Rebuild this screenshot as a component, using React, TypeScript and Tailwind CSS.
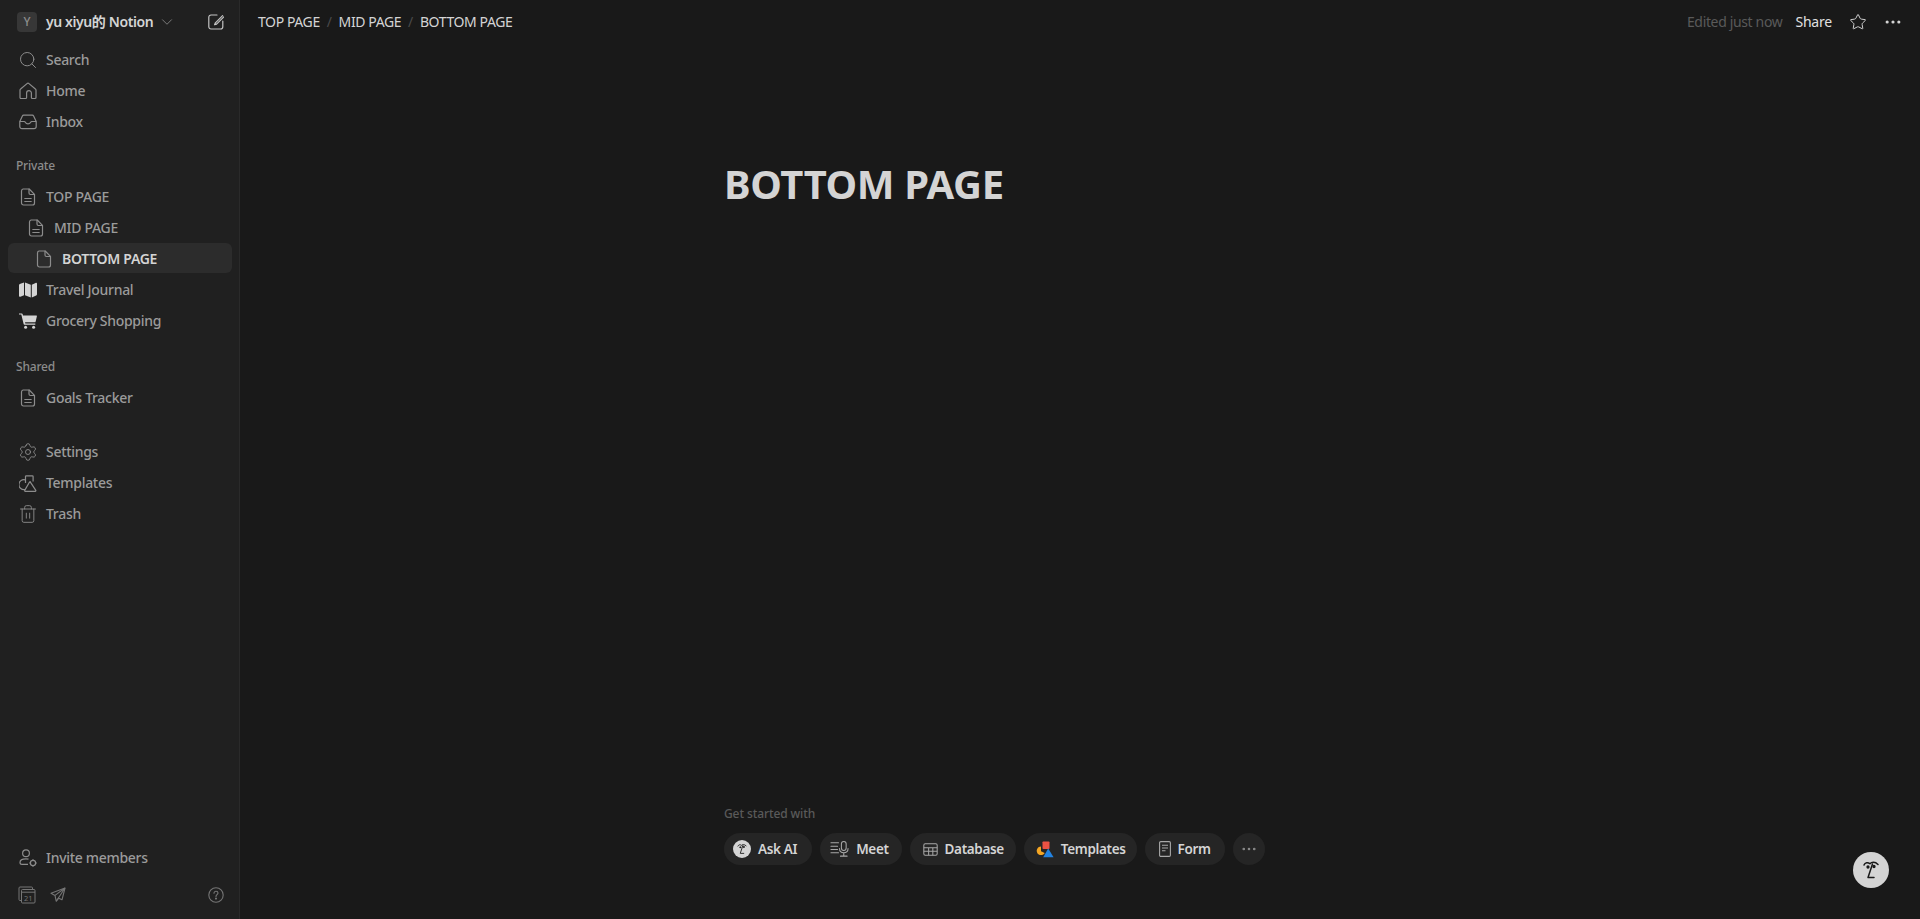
import type { ReactNode } from 'react';
import { ChevronDown, Ellipsis, Search, Settings, Star, Trash2 } from 'lucide-react';

function FileLines({ lines = true }: { lines?: boolean }) {
  return (
    <svg viewBox="0 0 16 18" className="h-[18px] w-4" fill="none" stroke="currentColor" strokeWidth="1.2" strokeLinejoin="round" strokeLinecap="round">
      <path d="M3 1h6.2L14.5 6.4V15a2 2 0 0 1-2 2H3.5a2 2 0 0 1-2-2V3a2 2 0 0 1 1.5-2Z" />
      <path d="M9 1.2V5a1.5 1.5 0 0 0 1.5 1.5h3.8" />
      {lines && <path d="M4.8 10.5h6.4M4.8 13.5h6.4" />}
    </svg>
  );
}

function HomeIcon() {
  return (
    <svg viewBox="0 0 18 18" className="h-[18px] w-[18px]" fill="none" stroke="currentColor" strokeWidth="1.2" strokeLinejoin="round">
      <path d="M1 15.5V8.2a1.6 1.6 0 0 1 .6-1.2L8 1.6a1.6 1.6 0 0 1 2 0l6.4 5.4a1.6 1.6 0 0 1 .6 1.2v7.3a1 1 0 0 1-1 1h-2.6a1 1 0 0 1-1-1V11a2.4 2.4 0 0 0-4.8 0v4.5a1 1 0 0 1-1 1H2a1 1 0 0 1-1-1Z" />
    </svg>
  );
}

function InboxIcon() {
  return (
    <svg viewBox="0 0 18 18" className="h-[18px] w-[18px]" fill="none" stroke="currentColor" strokeWidth="1.2" strokeLinejoin="round">
      <path d="M.8 8.5 3.4 3a1.4 1.4 0 0 1 1.3-.8h8.6a1.4 1.4 0 0 1 1.3.8l2.6 5.5v5a2.2 2.2 0 0 1-2.2 2.2H3a2.2 2.2 0 0 1-2.2-2.2Z" />
      <path d="M.8 8.5h4.4c.8 0 1 .5 1.3 1.1.4.8 1.1 1.3 2.5 1.3s2.1-.5 2.5-1.3c.3-.6.5-1.1 1.3-1.1h4.4" />
    </svg>
  );
}

function MapIcon() {
  return (
    <svg viewBox="0 0 18 16" className="h-4 w-[18px]" fill="currentColor">
      <path d="M0 3.2c0-.5.3-.9.8-1.1L5 .6v12.6l-3.6 1.5c-.7.3-1.4-.2-1.4-.9ZM6 .6l5.8 2.2v12.6L6 13.2ZM12.8 2.8 16.6.9c.7-.3 1.4.2 1.4.9v10.5c0 .5-.3.9-.8 1.1l-4.4 2Z" />
    </svg>
  );
}

function CartIcon() {
  return (
    <svg viewBox="0 0 18 16" className="h-4 w-[18px]" fill="currentColor">
      <path d="M0 .4h2.8c.4 0 .7.2.8.6l.4 1.4h13.2c.5 0 .8.5.7.9l-1.3 5.4c-.1.4-.4.6-.8.6H6l.3 1.3h10v1.2H5.4c-.3 0-.6-.2-.7-.5L2.3 1.6H0Z" />
      <circle cx="6.6" cy="14.2" r="1.5" />
      <circle cx="14.6" cy="14.2" r="1.5" />
    </svg>
  );
}

function TemplatesIcon() {
  return (
    <svg viewBox="0 0 18 17" className="h-[17px] w-[18px]" fill="none" stroke="currentColor" strokeWidth="1.2" strokeLinejoin="round">
      <path d="M6.2 4.800A5 5 0 1 0 6 14.500" />
      <path d="M6.500 8V1.600a.8.8 0 0 1 .8-.8h6a.8.8 0 0 1 .8.8v5" />
      <path d="m11.200 6.800 5.600 8.600a.6.6 0 0 1-.5.9H6.200a.6.6 0 0 1-.5-.9l5-8.600a.6.6 0 0 1 .5-.2Z" />
    </svg>
  );
}

function InviteIcon() {
  return (
    <svg viewBox="0 0 18 18" className="h-[18px] w-[18px]" fill="none" stroke="currentColor" strokeWidth="1.2">
      <circle cx="7" cy="4.200" r="3.400" />
      <path d="M9.500 10.200C8.700 10 7.900 9.900 7 9.900c-3.200 0-6 1.300-6 3.500 0 1.100.9 1.900 2 1.900h6" />
      <circle cx="14" cy="14" r="2.600" />
      <path d="M14 11.200v-1M14 17.800v-1M11.200 14h-1M17.800 14h-1" />
    </svg>
  );
}

function CalendarIcon() {
  return (
    <svg viewBox="0 0 18 18" className="h-[18px] w-[18px]" fill="none" stroke="currentColor" strokeWidth="1">
      <path d="M3 14.500H2a1 1 0 0 1-1-1V2a1 1 0 0 1 1-1h11.500a1 1 0 0 1 1 1v1" />
      <rect x="3.500" y="3.500" width="13.500" height="13.500" rx="1" />
      <path d="M3.500 6.200H17" />
      <text x="10.200" y="14.600" textAnchor="middle" fontSize="7.500" fill="currentColor" stroke="none">21</text>
    </svg>
  );
}

function SendIcon() {
  return (
    <svg viewBox="0 0 16 16" className="h-4 w-4" fill="none" stroke="currentColor" strokeWidth="1.1" strokeLinejoin="round">
      <path d="M15 1 1 6.200l4 2.200 1.200 5.800 2.600-3 3.200 1.600Z" />
      <path d="M15 1 5 8.400M15 1 6.200 14.200" />
    </svg>
  );
}

function HelpIcon() {
  return (
    <svg viewBox="0 0 16 16" className="h-4 w-4" fill="none" stroke="currentColor" strokeWidth="1.1" strokeLinecap="round">
      <circle cx="8" cy="8" r="7.200" />
      <path d="M6 6.200C6 5 6.900 4.300 8 4.300s2 .7 2 1.800c0 1.500-2 1.700-2 3.300" />
      <circle cx="8" cy="11.600" r=".5" fill="currentColor" />
    </svg>
  );
}

function NewPageIcon() {
  return (
    <svg viewBox="0 0 16 16" className="h-4 w-4" fill="none" stroke="currentColor" strokeWidth="1.2" strokeLinecap="round" strokeLinejoin="round">
      <path d="M9 1H3a2.200 2.200 0 0 0-2.200 2.200v9.600A2.200 2.200 0 0 0 3 15h9.600a2.200 2.200 0 0 0 2.200-2.200V7" />
      <path d="M14.600 1.600 7.400 8.800l-.8 2 2-.7 7.200-7.200" />
    </svg>
  );
}

function FaceIcon({ className }: { className: string }) {
  return (
    <svg viewBox="0 0 24 24" className={className} fill="none" stroke="currentColor" strokeWidth="1.5" strokeLinecap="round" strokeLinejoin="round">
      <path d="M5 7c1-2.600 4-3 6-1.200C12.500 4 16 3.500 19 6.500" />
      <path d="M13.500 6 9 19.500h6" />
      <circle cx="9" cy="9" r=".9" fill="currentColor" />
      <circle cx="15" cy="8.500" r=".9" fill="currentColor" />
    </svg>
  );
}

function MeetIcon() {
  return (
    <svg viewBox="0 0 20 18" className="h-[18px] w-[19px]" fill="none" stroke="currentColor" strokeWidth="1.1" strokeLinecap="round">
      <path d="M1 2.500h8M1 6h7M1 9.500h7M1 13h8" />
      <rect x="12" y="1" width="5" height="9.500" rx="2.500" />
      <path d="M10 8.500c0 3 1.500 4.500 4.500 4.500S19 11.500 19 8.500M14.500 13v3.500M11 16.500h7" />
    </svg>
  );
}

function TableIcon() {
  return (
    <svg viewBox="0 0 16 14" className="h-[13px] w-[15px]" fill="none" stroke="currentColor" strokeWidth="1.1">
      <rect x=".8" y=".8" width="14.400" height="12.400" rx="1.500" />
      <path d="M.8 5h14.400M.8 9h14.400M6 5v8.200M10.500 5v8.200" />
    </svg>
  );
}

function ShapesIcon() {
  return (
    <svg viewBox="0 0 18 17" className="h-[17px] w-[18px]">
      <rect x="6.500" y=".5" width="7" height="7.500" rx=".8" fill="#eb5244" />
      <path d="M5 5.500A4.300 4.300 0 1 0 8.700 12L5 10.200Z" fill="#f5a623" />
      <path d="m12.200 7.500 5.400 8.800H7.200Z" fill="#2383e2" />
    </svg>
  );
}

function FormIcon() {
  return (
    <svg viewBox="0 0 12 16" className="h-4 w-3" fill="none" stroke="currentColor" strokeWidth="1.1">
      <rect x=".6" y=".6" width="10.800" height="14.800" rx="1.200" />
      <path d="M3 4.200h6M3 7h6M3 9.800h3.500" />
    </svg>
  );
}

type NavItem = { label: string; icon: ReactNode; indent?: string; active?: boolean };

function NavRow({ label, icon, indent = 'pl-[10px]', active }: NavItem) {
  return (
    <div className={`flex h-[30px] items-center rounded-md pt-[2px] ${indent} ${active ? 'bg-[#2c2c2c] text-[#d4d4d4]' : 'text-[#9b9b9b]'}`}>
      <span className="flex w-[20px] shrink-0 justify-center text-[#8c8c8c]">{icon}</span>
      <span className={`ml-2 text-sm leading-none tracking-[-0.3px] ${active ? 'font-semibold' : 'font-medium'}`}>{label}</span>
    </div>
  );
}

const topNav: NavItem[] = [
  { label: 'Search', icon: <Search size={20} strokeWidth={1.2} /> },
  { label: 'Home', icon: <HomeIcon /> },
  { label: 'Inbox', icon: <InboxIcon /> },
];

const privateNav: NavItem[] = [
  { label: 'TOP PAGE', icon: <FileLines /> },
  { label: 'MID PAGE', icon: <FileLines />, indent: 'pl-[18px]' },
  { label: 'BOTTOM PAGE', icon: <FileLines lines={false} />, indent: 'pl-[26px]', active: true },
  { label: 'Travel Journal', icon: <span className="text-[#d4d4d4]"><MapIcon /></span> },
  { label: 'Grocery Shopping', icon: <span className="text-[#d4d4d4]"><CartIcon /></span> },
];

const toolNav: NavItem[] = [
  { label: 'Settings', icon: <Settings size={20} strokeWidth={1.1} /> },
  { label: 'Templates', icon: <TemplatesIcon /> },
  { label: 'Trash', icon: <Trash2 size={20} strokeWidth={1.1} /> },
];

function Sidebar() {
  return (
    <aside className="flex h-full w-[240px] shrink-0 flex-col border-r border-[#2a2a2a] bg-[#202020] pl-2 pr-[7px] pb-[9px]">
      <div className="flex h-[44px] shrink-0 items-center pl-[9px] pr-[8px]">
        <span className="flex h-5 w-5 items-center justify-center rounded bg-[#373737] text-xs font-medium text-[#8c8c8c]">Y</span>
        <span className="ml-[9px] text-sm font-semibold tracking-[-0.4px] text-[#d4d4d4]">yu xiyu的 Notion</span>
        <ChevronDown size={18} strokeWidth={1.1} className="ml-[5px] text-[#8c8c8c]" />
        <span className="ml-auto text-[#c4c4c4]"><NewPageIcon /></span>
      </div>
      <nav className="flex flex-col gap-px">
        {topNav.map((item) => <NavRow key={item.label} {...item} />)}
      </nav>
      <div className="mt-[21px] mb-[6px] pl-2 text-xs leading-[18px] font-medium tracking-[-0.2px] text-[#8c8c8c]">Private</div>
      <nav className="flex flex-col gap-px">
        {privateNav.map((item) => <NavRow key={item.label} {...item} />)}
      </nav>
      <div className="mt-[23px] mb-[6px] pl-2 text-xs leading-[18px] font-medium tracking-[-0.2px] text-[#8c8c8c]">Shared</div>
      <NavRow label="Goals Tracker" icon={<FileLines />} />
      <nav className="mt-[24px] flex flex-col gap-px">
        {toolNav.map((item) => <NavRow key={item.label} {...item} />)}
      </nav>
      <div className="flex-1" />
      <NavRow label="Invite members" icon={<InviteIcon />} />
      <div className="mt-[8px] flex h-[30px] items-center pl-[10px] pr-[8px] text-[#757575]">
        <CalendarIcon />
        <span className="ml-[14px]"><SendIcon /></span>
        <span className="ml-auto"><HelpIcon /></span>
      </div>
    </aside>
  );
}

function TopBar() {
  const crumbs = ['TOP PAGE', 'MID PAGE', 'BOTTOM PAGE'];
  return (
    <header className="flex h-[44px] shrink-0 items-center pl-[18px] pr-[17px] text-sm tracking-[-0.4px]">
      {crumbs.map((crumb, i) => (
        <span key={crumb} className="flex items-center">
          {i > 0 && <span className="mx-[7px] text-[#4a4a4a]">/</span>}
          <span className="text-[#d4d4d4]">{crumb}</span>
        </span>
      ))}
      <span className="ml-auto tracking-[-0.35px] text-[#5a5a5a]">Edited just now</span>
      <span className="ml-[13px] tracking-[-0.2px] text-[#e0e0e0]">Share</span>
      <Star size={18} strokeWidth={1.3} className="ml-[17px] text-[#d4d4d4]" />
      <Ellipsis size={20} strokeWidth={1.8} className="ml-[16px] text-[#d4d4d4]" />
    </header>
  );
}

const starters = [
  { label: 'Ask AI', pad: 'pl-[9px] pr-[15px]', icon: <span className="flex h-[18px] w-[18px] items-center justify-center rounded-full bg-[#d4d4d4] text-[#191919]"><FaceIcon className="h-[14px] w-[14px]" /></span> },
  { label: 'Meet', pad: 'pl-[10px] pr-[13px]', icon: <span className="text-[#a8a8a8]"><MeetIcon /></span> },
  { label: 'Database', pad: 'pl-[13px] pr-[12px]', icon: <span className="text-[#a8a8a8]"><TableIcon /></span> },
  { label: 'Templates', pad: 'pl-[12px] pr-[11px]', icon: <ShapesIcon /> },
  { label: 'Form', pad: 'pl-[14px] pr-[14px]', icon: <span className="text-[#a8a8a8]"><FormIcon /></span> },
];

function Main() {
  return (
    <main className="relative flex h-full min-w-0 flex-1 flex-col bg-[#191919]">
      <TopBar />
      <div className="mx-auto flex w-[708px] flex-1 -translate-x-[2px] flex-col pb-[54px]">
        <h1 className="mt-[113px] text-[40px] leading-[54px] font-bold tracking-[-0.4px] text-[#d4d4d4]">BOTTOM PAGE</h1>
        <div className="flex-1" />
        <p className="text-xs leading-4 font-medium tracking-[-0.1px] text-[#5a5a5a]">Get started with</p>
        <div className="mt-[11px] flex gap-2">
          {starters.map((s) => (
            <button key={s.label} className={`flex h-8 items-center gap-[7px] rounded-full bg-[#252525] ${s.pad} text-[13.5px] font-semibold tracking-[-0.35px] text-[#d4d4d4]`}>
              <span className="flex justify-center">{s.icon}</span>
              {s.label}
            </button>
          ))}
          <button className="flex h-8 w-8 items-center justify-center rounded-full bg-[#252525] text-[#8c8c8c]">
            <Ellipsis size={18} strokeWidth={1.5} />
          </button>
        </div>
      </div>
      <button className="absolute right-[31px] bottom-[31px] flex h-9 w-9 items-center justify-center rounded-full bg-[#d4d4d4] text-[#191919]">
        <FaceIcon className="h-6 w-6" />
      </button>
    </main>
  );
}

export default function App() {
  return (
    <div className="flex h-screen w-full overflow-hidden font-['Noto_Sans','Noto_Sans_CJK_SC',sans-serif]">
      <Sidebar />
      <Main />
    </div>
  );
}
